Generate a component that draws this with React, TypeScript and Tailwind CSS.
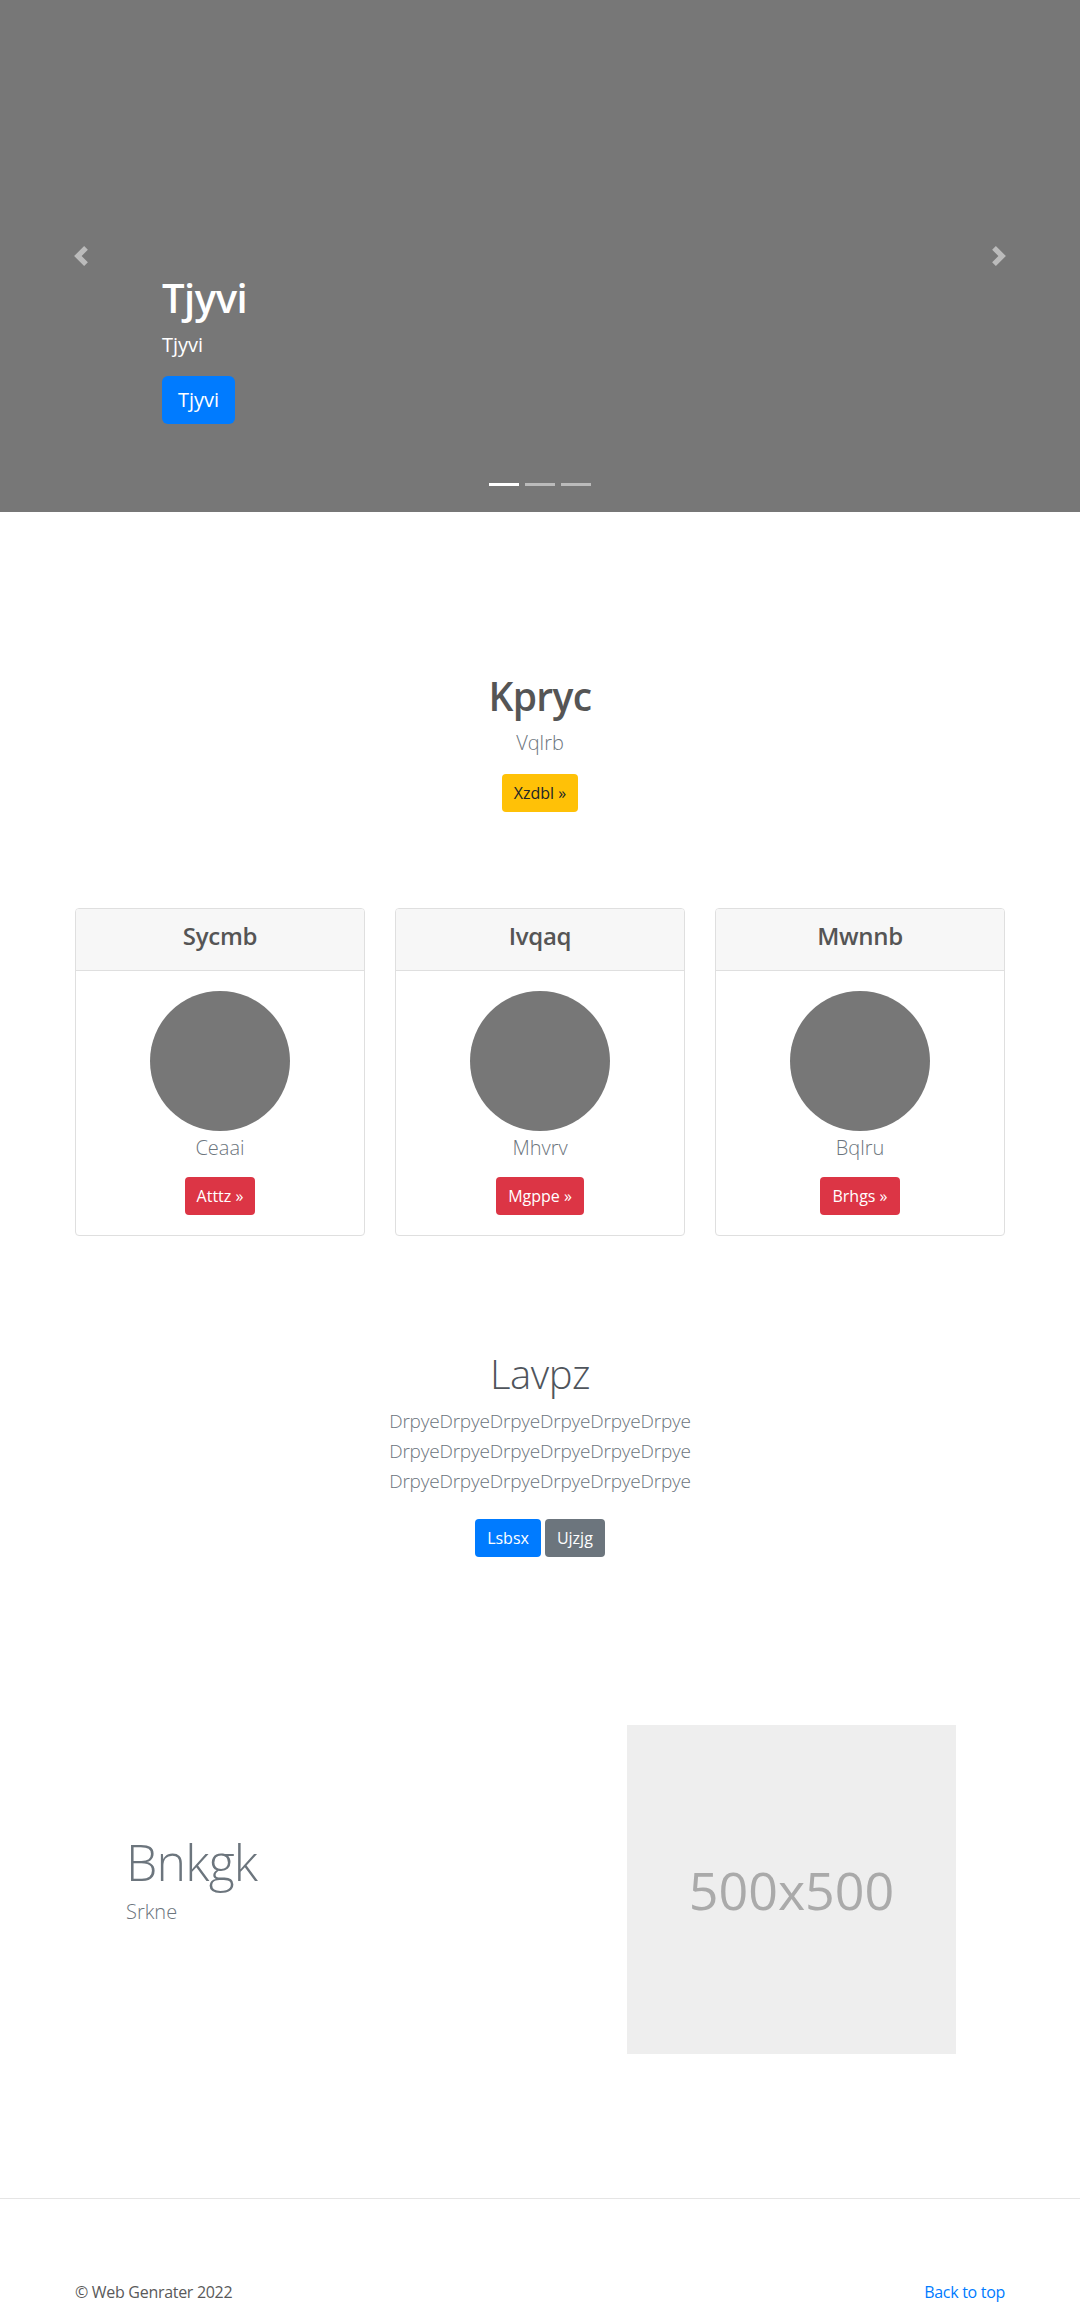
import React from 'react';

const cards = [
  { title: 'Sycmb', text: 'Ceaai', button: 'Atttz »' },
  { title: 'Ivqaq', text: 'Mhvrv', button: 'Mgppe »' },
  { title: 'Mwnnb', text: 'Bqlru', button: 'Brhgs »' },
];

const font = { fontFamily: '"Open Sans", "Noto Sans", Arial, sans-serif' };

function Chevron({ dir }: { dir: 'prev' | 'next' }) {
  return (
    <svg width="20" height="20" viewBox="0 0 8 8" fill="#fff" className="opacity-50">
      {dir === 'prev' ? (
        <path d="M5.25 0l-4 4 4 4 1.5-1.5L4.25 4l2.5-2.5L5.25 0z" />
      ) : (
        <path d="M2.75 0l-1.5 1.5L3.75 4l-2.5 2.5L2.75 8l4-4-4-4z" />
      )}
    </svg>
  );
}

export default function App() {
  return (
    <div className="bg-white text-[#5a5a5a]" style={font}>
      {/* Carousel */}
      <div className="relative flex h-[512px] bg-[#777]">
        <div className="flex w-[15%] items-center justify-center">
          <Chevron dir="prev" />
        </div>
        <div className="flex flex-1 flex-col justify-end pb-[88px] text-white">
          <h1 className="mb-2 text-[40px] font-semibold leading-[48px] tracking-[-0.5px]">Tjyvi</h1>
          <p className="mb-4 text-[20px] leading-[30px]">Tjyvi</p>
          <div>
            <button className="h-[48px] rounded-md bg-[#007bff] px-4 text-[20px] text-white">Tjyvi</button>
          </div>
        </div>
        <div className="flex w-[15%] items-center justify-center">
          <Chevron dir="next" />
        </div>
        {/* Indicators */}
        <div className="absolute bottom-[26px] left-0 right-0 flex justify-center gap-[6px]">
          <span className="h-[3px] w-[30px] bg-white" />
          <span className="h-[3px] w-[30px] bg-white/50" />
          <span className="h-[3px] w-[30px] bg-white/50" />
        </div>
      </div>

      {/* Jumbotron */}
      <div className="mt-[160px] flex flex-col items-center text-center">
        <h1 className="mb-2 text-[39px] font-semibold leading-[48px] tracking-[-0.6px] text-[#555]">Kpryc</h1>
        <p className="mb-4 text-[20px] font-light leading-[30px] text-[#6c757d]">Vqlrb</p>
        <button className="h-[38px] rounded bg-[#ffc107] px-3 text-[16px] text-[#212529]">Xzdbl »</button>
      </div>

      {/* Cards */}
      <div className="mx-auto mt-[96px] grid w-[930px] grid-cols-3 gap-[30px]">
        {cards.map((c) => (
          <div key={c.title} className="overflow-hidden rounded border border-[#dfdfdf] text-center">
            <div className="h-[62px] border-b border-[#dfdfdf] bg-[#f7f7f7] pt-3">
              <h4 className="text-[24px] font-semibold leading-[29px] tracking-[-0.3px] text-[#555]">{c.title}</h4>
            </div>
            <div className="flex flex-col items-center px-5 pt-5 pb-5">
              <div className="h-[140px] w-[140px] rounded-full bg-[#777]" />
              <p className="mt-[2px] text-[20px] font-light leading-[30px] text-[#6c757d]">{c.text}</p>
              <button className="mt-[14px] h-[38px] rounded bg-[#dc3545] px-3 text-[16px] text-white">{c.button}</button>
            </div>
          </div>
        ))}
      </div>

      {/* Text block */}
      <div className="mt-[114px] flex flex-col items-center text-center">
        <h2 className="text-[40px] font-light leading-[48px] tracking-[-0.5px] text-[#4f555c]">Lavpz</h2>
        <p className="mt-2 text-[19px] font-light leading-[30px] tracking-[-0.2px] text-[#6c757d]">
          DrpyeDrpyeDrpyeDrpyeDrpyeDrpye
          <br />
          DrpyeDrpyeDrpyeDrpyeDrpyeDrpye
          <br />
          DrpyeDrpyeDrpyeDrpyeDrpyeDrpye
        </p>
        <div className="mt-[23px] flex gap-1">
          <button className="h-[38px] rounded bg-[#007bff] px-3 text-[16px] text-white">Lsbsx</button>
          <button className="h-[38px] rounded bg-[#6c757d] px-3 text-[16px] text-white">Ujzjg</button>
        </div>
      </div>

      {/* Featurette */}
      <div className="mx-auto mt-[168px] flex w-[930px] items-center">
        <div className="flex-1 pl-[51px]">
          <h2 className="text-[50px] font-light leading-[50px] tracking-[-0.8px] text-[#6c757d]">Bnkgk</h2>
          <p className="mt-[10px] mb-4 text-[20px] font-light leading-[30px] text-[#6c757d]">Srkne</p>
        </div>
        <div className="mr-[49px] flex h-[329px] w-[329px] items-center justify-center bg-[#eee] text-[52px] text-[#aaa]">
          500x500
        </div>
      </div>

      {/* Footer */}
      <div className="mt-[144px] border-t border-[#e5e5e5]">
        <div className="mx-auto flex w-[930px] justify-between pt-[81px] pb-4 text-[16px] leading-[24px] tracking-[-0.3px]">
          <p>© Web Genrater 2022</p>
          <a className="text-[#007bff]">Back to top</a>
        </div>
      </div>
    </div>
  );
}
